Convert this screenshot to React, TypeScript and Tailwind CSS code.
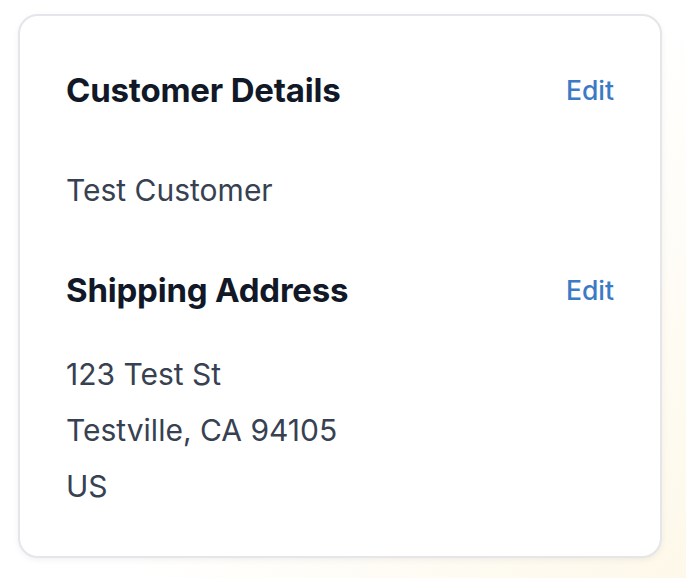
const address = ["123 Test St", "Testville, CA 94105", "US"];

function SectionHeader({ title }: { title: string }) {
  return (
    <div className="flex items-center justify-between">
      <h2 className="text-[33px] font-bold leading-[56px] tracking-[-0.2px] text-[#111827]">{title}</h2>
      <button className="text-[26.5px] font-medium leading-[56px] text-[#3b7ac4]">Edit</button>
    </div>
  );
}

export default function App() {
  return (
    <div
      className="min-h-[578px] bg-[linear-gradient(135deg,#ffffff_55%,#fdf8e9_100%)] pt-[14px] pl-[18px] pr-[24px]"
      style={{ fontFamily: "Inter, 'Liberation Sans', sans-serif" }}
    >
      <div className="w-[644px] rounded-[20px] border-2 border-[#e5e5ea] bg-white px-[46px] pt-[46px] pb-[42px] shadow-[0_2px_6px_rgba(0,0,0,0.06)]">
        <SectionHeader title="Customer Details" />
        <p className="mt-[44px] text-[30px] leading-[56px] text-[#374151]">Test Customer</p>
        <div className="mt-[44px]">
          <SectionHeader title="Shipping Address" />
        </div>
        <div className="mt-[28px]">
          {address.map((line) => (
            <p key={line} className="text-[30px] leading-[56px] text-[#374151]">
              {line}
            </p>
          ))}
        </div>
      </div>
    </div>
  );
}
